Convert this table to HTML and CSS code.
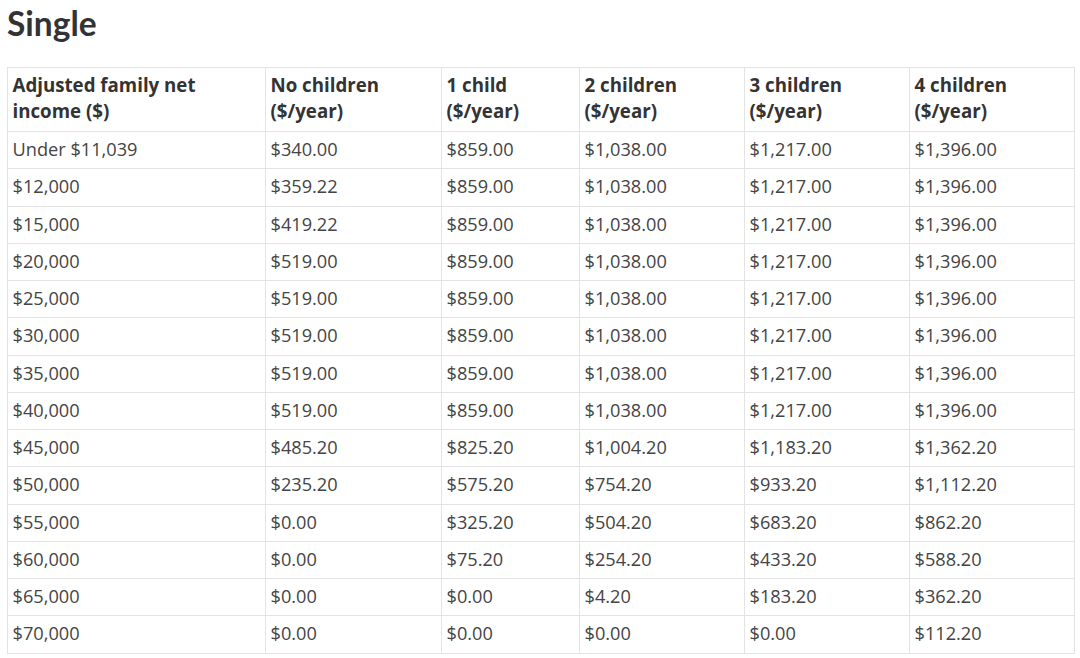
FILE: index.html
```html
<!DOCTYPE html>
<html>
<head>
<meta charset="utf-8">
<link rel="stylesheet" href="styles.css">
</head>
<body>
<h2 class="title">Single</h2>
<table class="rates">
  <colgroup>
    <col class="c1"><col class="c2"><col class="c3"><col class="c4"><col class="c5"><col class="c6">
  </colgroup>
  <thead>
    <tr><th>Adjusted family net income ($)</th><th>No children ($/year)</th><th>1 child ($/year)</th><th>2 children ($/year)</th><th>3 children ($/year)</th><th>4 children ($/year)</th></tr>
  </thead>
  <tbody>
    <tr><td>Under $11,039</td><td>$340.00</td><td>$859.00</td><td>$1,038.00</td><td>$1,217.00</td><td>$1,396.00</td></tr>
    <tr><td>$12,000</td><td>$359.22</td><td>$859.00</td><td>$1,038.00</td><td>$1,217.00</td><td>$1,396.00</td></tr>
    <tr><td>$15,000</td><td>$419.22</td><td>$859.00</td><td>$1,038.00</td><td>$1,217.00</td><td>$1,396.00</td></tr>
    <tr><td>$20,000</td><td>$519.00</td><td>$859.00</td><td>$1,038.00</td><td>$1,217.00</td><td>$1,396.00</td></tr>
    <tr><td>$25,000</td><td>$519.00</td><td>$859.00</td><td>$1,038.00</td><td>$1,217.00</td><td>$1,396.00</td></tr>
    <tr><td>$30,000</td><td>$519.00</td><td>$859.00</td><td>$1,038.00</td><td>$1,217.00</td><td>$1,396.00</td></tr>
    <tr><td>$35,000</td><td>$519.00</td><td>$859.00</td><td>$1,038.00</td><td>$1,217.00</td><td>$1,396.00</td></tr>
    <tr><td>$40,000</td><td>$519.00</td><td>$859.00</td><td>$1,038.00</td><td>$1,217.00</td><td>$1,396.00</td></tr>
    <tr><td>$45,000</td><td>$485.20</td><td>$825.20</td><td>$1,004.20</td><td>$1,183.20</td><td>$1,362.20</td></tr>
    <tr><td>$50,000</td><td>$235.20</td><td>$575.20</td><td>$754.20</td><td>$933.20</td><td>$1,112.20</td></tr>
    <tr><td>$55,000</td><td>$0.00</td><td>$325.20</td><td>$504.20</td><td>$683.20</td><td>$862.20</td></tr>
    <tr><td>$60,000</td><td>$0.00</td><td>$75.20</td><td>$254.20</td><td>$433.20</td><td>$588.20</td></tr>
    <tr><td>$65,000</td><td>$0.00</td><td>$0.00</td><td>$4.20</td><td>$183.20</td><td>$362.20</td></tr>
    <tr><td>$70,000</td><td>$0.00</td><td>$0.00</td><td>$0.00</td><td>$0.00</td><td>$112.20</td></tr>
  </tbody>
</table>
</body>
</html>
```
FILE: styles.css
```css
html, body {
  margin: 0;
  padding: 0;
  background: #ffffff;
}
body {
  padding: 0 6px 0 7px;
  font-family: "Open Sans", "Liberation Sans", sans-serif;
  color: #3a3a3a;
}
.title {
  font-family: Lato, "Open Sans", sans-serif;
  font-weight: 700;
  font-size: 33.5px;
  line-height: 46px;
  margin: 0 0 21px 0;
  color: #333333;
}
.rates {
  border-collapse: collapse;
  table-layout: fixed;
  width: 1067px;
  font-size: 18.2px;
}
.c1 { width: 258px; }
.c2 { width: 176px; }
.c3 { width: 138px; }
.c4 { width: 165px; }
.c5 { width: 165px; }
.c6 { width: 165px; }
.rates th, .rates td {
  border: 1px solid #e3e3e3;
  text-align: left;
  vertical-align: middle;
  padding: 0 5px 0 4.5px;
}
.rates th {
  font-weight: 700;
  font-size: 18.7px;
  line-height: 26px;
  height: 64px;
  box-sizing: border-box;
  padding-top: 0;
  padding-bottom: 4px;
  color: #333333;
}
.rates td {
  height: 34.25px;
  line-height: 22px;
  padding-bottom: 2px;
  color: #444444;
}
```
